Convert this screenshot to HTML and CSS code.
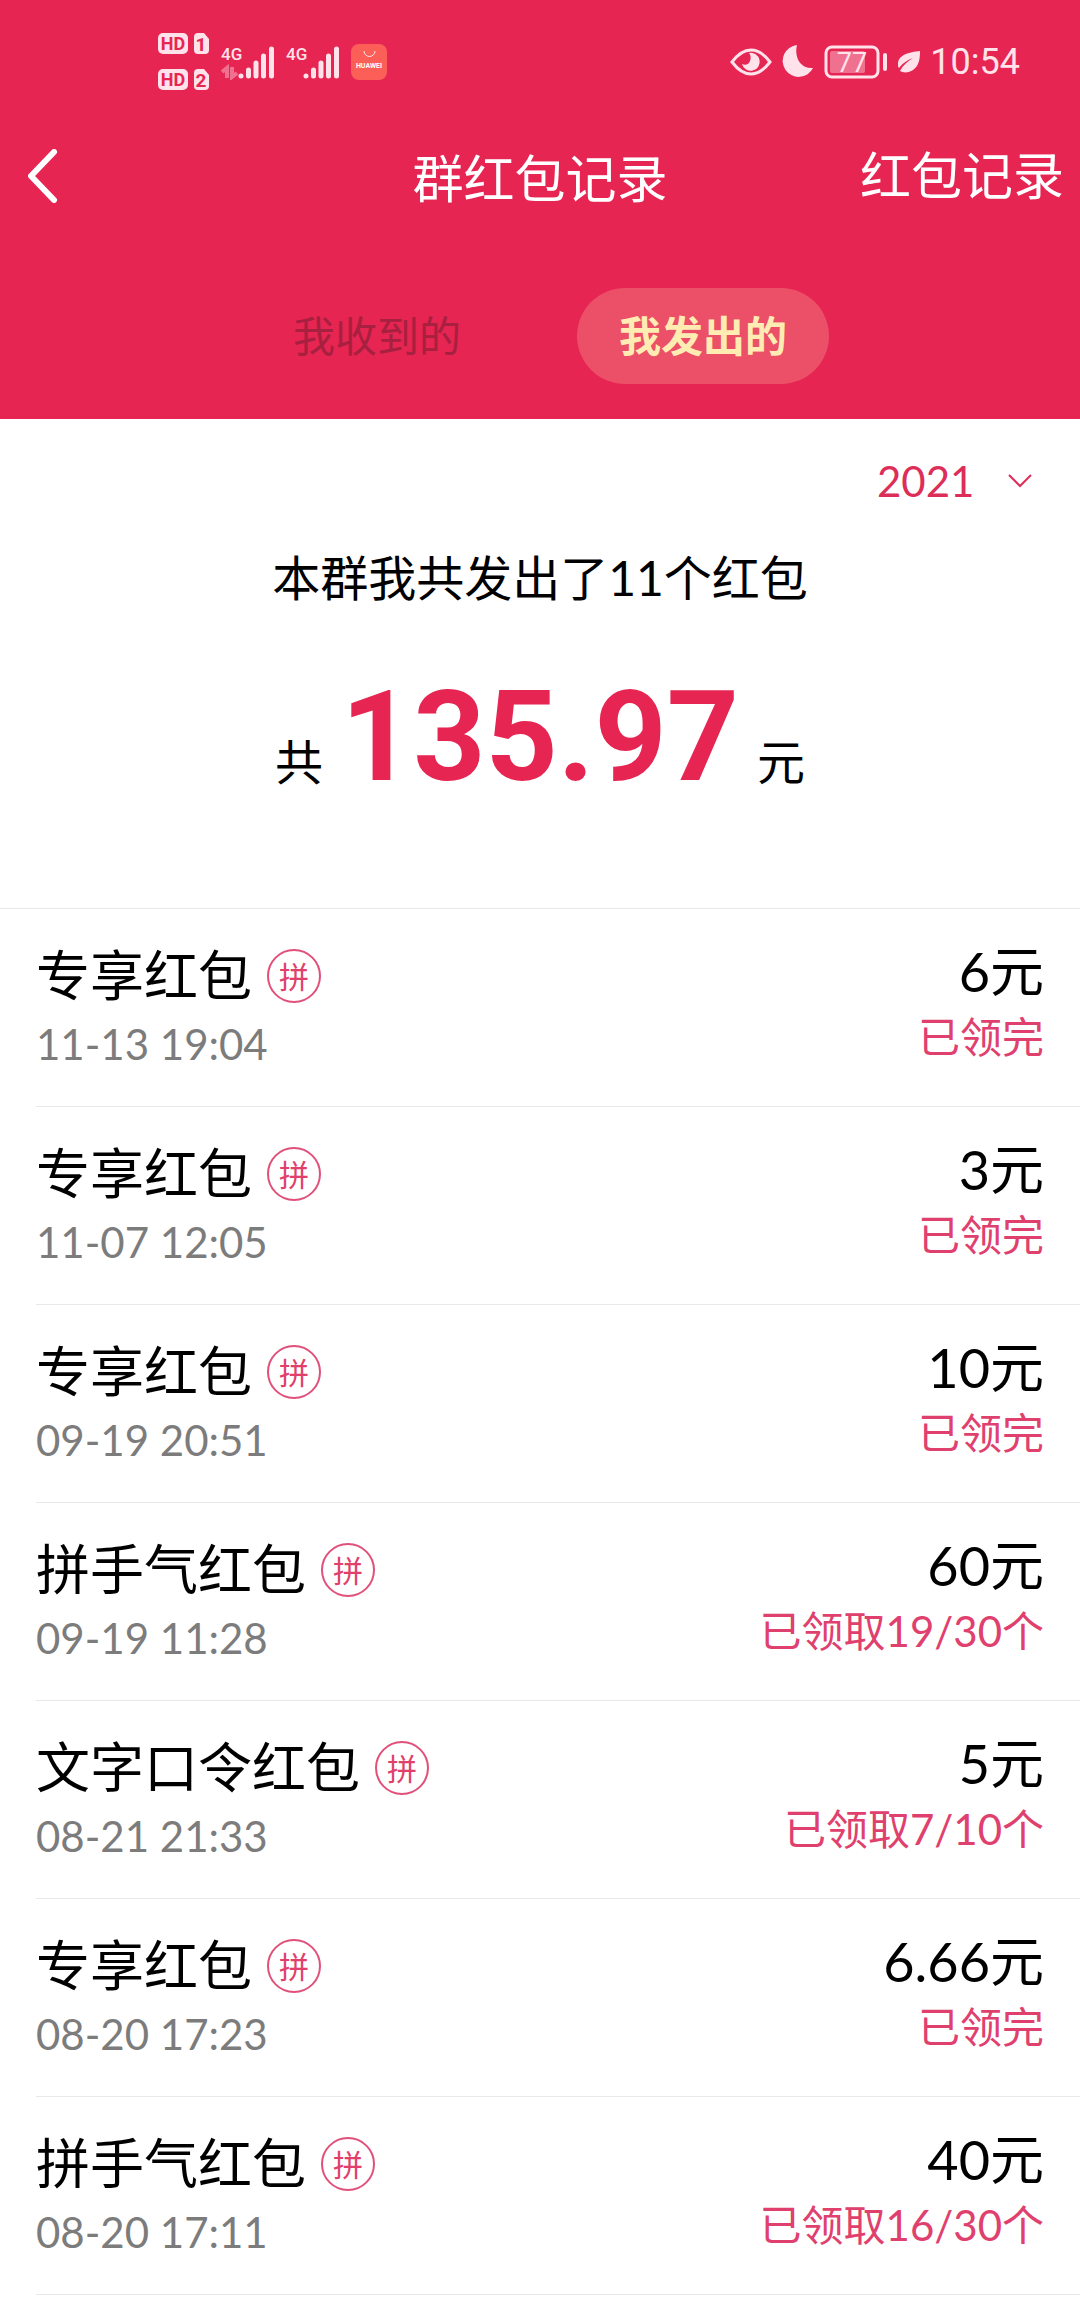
FILE: index.html
```html
<!DOCTYPE html>
<html lang="zh-CN">

<head>
  <meta charset="utf-8" />
  <meta name="viewport" content="width=device-width" />
  <title>群红包记录</title>
  <link rel="stylesheet" href="styles.css">
</head>

<body>
  <header class="header">
    <div class="status-bar">
      <svg class="status-hd" width="51" height="58" viewBox="0 0 51 58">
        <rect x="0" y="0" width="30" height="21" rx="5" />
        <path d="M40 0h6l5 6v11a4 4 0 0 1-4 4h-7a4 4 0 0 1-4-4V4a4 4 0 0 1 4-4z" />
        <rect x="0" y="36" width="30" height="21" rx="5" />
        <path d="M40 36h6l5 6v11a4 4 0 0 1-4 4h-7a4 4 0 0 1-4-4V40a4 4 0 0 1 4-4z" />
        <text x="15" y="17" font-size="18">HD</text>
        <text x="43" y="18" font-size="19">1</text>
        <text x="15" y="53" font-size="18">HD</text>
        <text x="43" y="54" font-size="19">2</text>
      </svg>
      <svg class="status-signal" width="53" height="36" viewBox="0 0 53 36">
        <text x="0" y="16" font-size="17">4G</text>
        <path class="faint" d="M6 34V24L1 28M11 23v10l5-4" />
        <path class="bars" d="M20 32v0M27.500 32v-6M35 32v-13M42.500 32v-20M50.500 32v-27" />
      </svg>
      <svg class="status-signal" width="53" height="36" viewBox="0 0 53 36">
        <text x="0" y="16" font-size="17">4G</text>
        <path class="bars" d="M20 32v0M27.500 32v-6M35 32v-13M42.500 32v-20M50.500 32v-27" />
      </svg>
      <svg class="status-app" width="36" height="36" viewBox="0 0 36 36">
        <rect width="36" height="36" rx="8" />
        <path d="M13 7a5 5 0 0 0 11 0" />
        <text x="18" y="24" font-size="7">HUAWEI</text>
      </svg>

      <div class="status-right">
        <svg width="42" height="28" viewBox="0 0 42 28">
          <path d="M2 14C8 6 14 2 21 2s13 4 19 12c-6 8-12 12-19 12S8 22 2 14z" fill="none" stroke="currentColor" stroke-width="3" />
          <path d="M19 5a9 9 0 1 1-7 11c4 2 7 0 8-3 1-3 1-6-1-8z" fill="currentColor" />
        </svg>
        <svg class="moon" width="32" height="34" viewBox="0 0 32 34">
          <path d="M15 0C12 12 18 24 31 23A16 16 0 1 1 15 0z" fill="currentColor" />
        </svg>
        <svg class="battery" width="64" height="34" viewBox="0 0 64 34">
          <rect x="2" y="2" width="52" height="30" rx="6" fill="none" stroke="currentColor" stroke-width="3" />
          <rect x="6" y="6" width="35" height="22" rx="2" fill="currentColor" opacity="0.4" />
          <rect x="59" y="8" width="4" height="18" rx="2" fill="currentColor" />
          <text x="28" y="27" font-size="27" text-anchor="middle" fill="currentColor">77</text>
        </svg>
        <svg width="22" height="22" viewBox="0 0 22 22">
          <path d="M22 0C11 1 0 4 0 13c0 2 0 3 1 4C5 12 9 9 15 7 10 10 5 14 2 20c3 2 9 2 13-1C21 15 22 8 22 0z" fill="currentColor" />
        </svg>
        <time class="clock">10:54</time>
      </div>
    </div>

    <nav class="nav">
      <button class="back" type="button" aria-label="返回">
        <svg width="30" height="54" viewBox="0 0 30 54">
          <path d="M26 3L3 27l23 24" fill="none" stroke="currentColor" stroke-width="6" stroke-linecap="round" stroke-linejoin="round" />
        </svg>
      </button>
      <h1 class="title">群红包记录</h1>
      <a class="nav-link" href="#records">红包记录</a>
    </nav>

    <div class="tabs">
      <button class="tab" type="button">我收到的</button>
      <button class="tab active" type="button">我发出的</button>
    </div>
  </header>

  <main>
    <section class="summary">
      <div class="year">
        <select class="year-select" aria-label="年份">
          <option>2021</option>
        </select>
        <svg class="year-arrow" width="26" height="16" viewBox="0 0 26 16">
          <path d="M2 2l11 11L24 2" fill="none" stroke="currentColor" stroke-width="2" />
        </svg>
      </div>
      <p class="count">本群我共发出了11个红包</p>
      <p class="total">共 <strong class="total-number">135.97</strong> 元</p>
    </section>

    <ul class="records" id="records">
      <li class="record">
        <div class="info">
          <p class="name">专享红包 <span class="badge">拼</span></p>
          <p class="date">11-13 19:04</p>
        </div>
        <div class="result">
          <p class="amount">6元</p>
          <p class="state">已领完</p>
        </div>
      </li>
      <li class="record">
        <div class="info">
          <p class="name">专享红包 <span class="badge">拼</span></p>
          <p class="date">11-07 12:05</p>
        </div>
        <div class="result">
          <p class="amount">3元</p>
          <p class="state">已领完</p>
        </div>
      </li>
      <li class="record">
        <div class="info">
          <p class="name">专享红包 <span class="badge">拼</span></p>
          <p class="date">09-19 20:51</p>
        </div>
        <div class="result">
          <p class="amount">10元</p>
          <p class="state">已领完</p>
        </div>
      </li>
      <li class="record">
        <div class="info">
          <p class="name">拼手气红包 <span class="badge">拼</span></p>
          <p class="date">09-19 11:28</p>
        </div>
        <div class="result">
          <p class="amount">60元</p>
          <p class="state">已领取19/30个</p>
        </div>
      </li>
      <li class="record">
        <div class="info">
          <p class="name">文字口令红包 <span class="badge">拼</span></p>
          <p class="date">08-21 21:33</p>
        </div>
        <div class="result">
          <p class="amount">5元</p>
          <p class="state">已领取7/10个</p>
        </div>
      </li>
      <li class="record">
        <div class="info">
          <p class="name">专享红包 <span class="badge">拼</span></p>
          <p class="date">08-20 17:23</p>
        </div>
        <div class="result">
          <p class="amount">6.66元</p>
          <p class="state">已领完</p>
        </div>
      </li>
      <li class="record">
        <div class="info">
          <p class="name">拼手气红包 <span class="badge">拼</span></p>
          <p class="date">08-20 17:11</p>
        </div>
        <div class="result">
          <p class="amount">40元</p>
          <p class="state">已领取16/30个</p>
        </div>
      </li>
    </ul>
  </main>
</body>

</html>
```
FILE: styles.css
```css
* {
  box-sizing: border-box;
}

body {
  margin: 0;
  background: #fff;
  color: #000;
  font-family: Lato, "Noto Sans CJK SC", sans-serif;
  font-size: 42px;
}

h1,
p,
ul {
  margin: 0;
  padding: 0;
}

button,
select {
  border: 0;
  padding: 0;
  background: none;
  color: inherit;
  font: inherit;
}

svg {
  display: block;
  flex: none;
}

/* header */

.header {
  background: #e62552;
  color: #fff;
  padding-bottom: 35px;
}

.status-bar {
  display: flex;
  align-items: center;
  height: 124px;
  padding: 0 60px 0 158px;
  color: #ffe2ea;
  font-family: Roboto, sans-serif;
}

.status-hd {
  fill: #ffe2ea;
  margin-right: 12px;
}

.status-hd text {
  fill: #e62552;
  font-weight: bold;
  text-anchor: middle;
}

.status-signal {
  fill: #ffe2ea;
  margin-right: 12px;
}

.status-signal text {
  font-weight: 500;
}

.status-signal path {
  fill: none;
  stroke: #ffe2ea;
  stroke-width: 4;
}

.status-signal .bars {
  stroke-width: 5;
  stroke-linecap: round;
}

.status-signal .faint {
  opacity: 0.4;
}

.status-app rect {
  fill: #fb5f58;
}

.status-app path {
  fill: none;
  stroke: #ffe2ea;
}

.status-app text {
  fill: #fff;
  font-weight: bold;
  text-anchor: middle;
}

.status-right {
  display: flex;
  align-items: center;
  gap: 10px;
  margin-left: auto;
}

.clock {
  font-size: 36px;
  line-height: 40px;
}

.nav {
  display: grid;
  grid-template-columns: 1fr auto 1fr;
  align-items: center;
  height: 104px;
  padding: 0 16px;
  font-size: 51px;
  line-height: 60px;
}

.back {
  justify-self: start;
  padding: 0 12px;
  cursor: pointer;
}

.title {
  padding-top: 6px;
  font-size: 51px;
  font-weight: normal;
}

.nav-link {
  justify-self: end;
  color: #fff;
  text-decoration: none;
}

.tabs {
  display: flex;
  justify-content: center;
  gap: 74px;
  padding-top: 60px;
}

.tab {
  height: 96px;
  padding: 0 42px;
  border-radius: 48px;
  color: #a8203f;
  line-height: 60px;
  cursor: pointer;
}

.tab.active {
  background: #ec4f68;
  color: #ffecb3;
  font-weight: bold;
}

/* summary */

.summary {
  padding: 30px 0 91px;
  border-bottom: 1px solid #e8e8e8;
  text-align: center;
}

.year {
  display: flex;
  justify-content: flex-end;
  align-items: center;
  gap: 32px;
  padding-right: 47px;
  color: #dc2e58;
}

.year-select {
  height: 64px;
  appearance: none;
}

.count {
  margin-top: 32px;
  font-size: 48px;
  line-height: 66px;
}

.total {
  display: flex;
  justify-content: center;
  align-items: baseline;
  gap: 18px;
  margin-top: 46px;
  font-size: 48px;
  line-height: 66px;
}

.total-number {
  color: #e62552;
  font-family: Roboto, sans-serif;
  font-size: 126px;
  line-height: 160px;
}

/* records */

.records {
  list-style: none;
  padding-left: 36px;
}

.record {
  display: flex;
  justify-content: space-between;
  padding: 27px 36px 30px 0;
  border-bottom: 1px solid #e8e8e8;
}

.info {
  padding-top: 4px;
}

.name,
.amount {
  font-size: 54px;
  line-height: 72px;
}

.name {
  display: flex;
  align-items: center;
  gap: 15px;
}

.badge {
  width: 54px;
  height: 54px;
  border: 2px solid #e0507a;
  border-radius: 50%;
  color: #e0406a;
  font-size: 30px;
  line-height: 50px;
  text-align: center;
}

.date {
  color: #7c7c7c;
  line-height: 64px;
}

.result {
  text-align: right;
}

.state {
  color: #e0406e;
  line-height: 58px;
}
```
